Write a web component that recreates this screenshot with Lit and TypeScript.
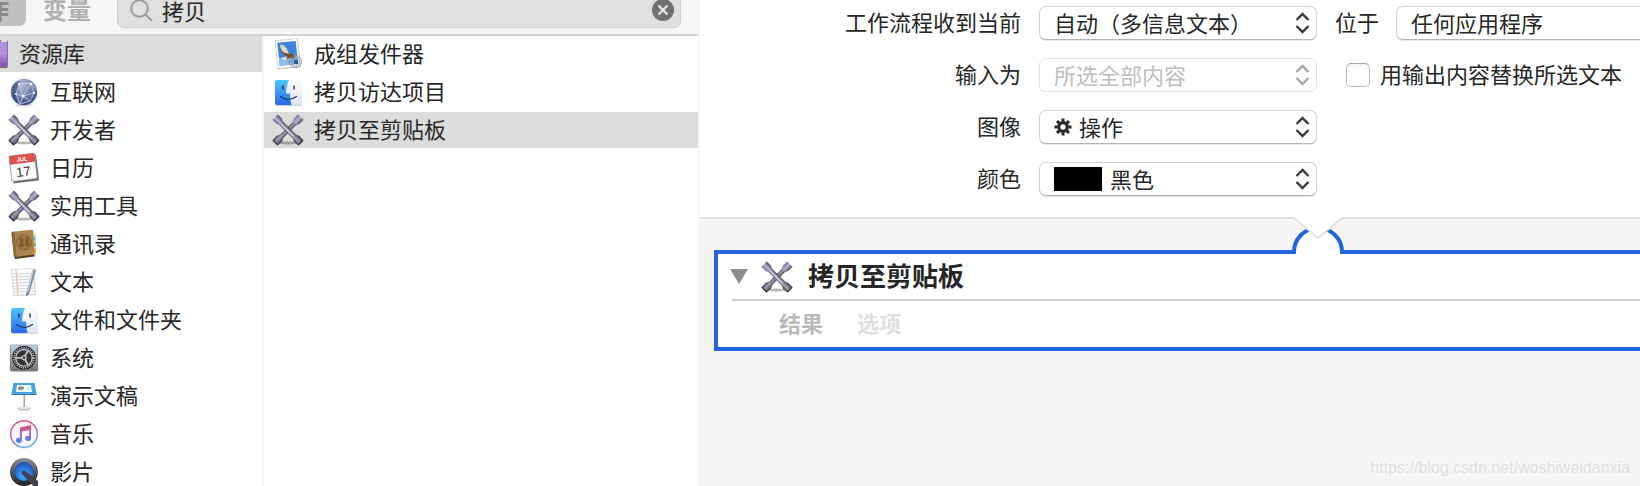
import { LitElement, html, svg, css, nothing, type SVGTemplateResult } from "lit";
import { customElement, property } from "lit/decorators.js";
import { classMap } from "lit/directives/class-map.js";

const ICONS: Record<string, SVGTemplateResult> = {
  library: svg`
    <defs><linearGradient id="g" x1="0" y1="0" x2="0" y2="1"><stop offset="0" stop-color="#a78fdc"/><stop offset=".5" stop-color="#b994e0"/><stop offset="1" stop-color="#8650b4"/></linearGradient></defs>
    <rect x="6" y="1" width="24" height="28" rx="2" fill="#8d6d9e"/>
    <rect x="6" y="2" width="23" height="25" rx="1" fill="url(#g)"/>
    <rect x="23" y="0" width="6" height="3" rx="1" fill="#dcdfd8"/>
    <path d="M6 28.5h23" stroke="#6f6a68" stroke-width="1.2"/>`,
  globe: svg`
    <defs><radialGradient id="g" cx=".4" cy=".2" r=".85"><stop offset="0" stop-color="#b4bfdb"/><stop offset=".5" stop-color="#7485b4"/><stop offset="1" stop-color="#35447a"/></radialGradient></defs>
    <ellipse cx="15" cy="28" rx="9" ry="1.6" fill="#000" opacity=".15"/>
    <circle cx="15" cy="15" r="13.2" fill="url(#g)"/>
    <path d="M2.5 11Q2 20 8 26.200Q7 14 11 4Q5 5 2.500 11Z" fill="#34406f" opacity=".6"/>
    <g fill="none" stroke="#dbe3f5" stroke-width=".8" opacity=".85"><path d="M10 7L22 6M10 7L7 17L14 19L22 6L25 16L14 19L11 27M14 19L21 24L25 16M7 17L11 27M10 7L14 19M21 24L11 27M22 6L28 13"/></g>
    <g fill="#fff"><circle cx="14" cy="19" r="1.500"/><circle cx="22" cy="7" r="1.200"/><circle cx="10" cy="7" r="1"/><circle cx="25" cy="16" r="1.100"/><circle cx="7" cy="17" r="1"/></g>`,
  tools: svg`
    <defs><linearGradient id="g" x1="0" y1="0" x2="1" y2="0"><stop offset="0" stop-color="#3c3c48"/><stop offset=".4" stop-color="#a5a5b4"/><stop offset="1" stop-color="#3e3e4c"/></linearGradient>
    <linearGradient id="h" x1="0" y1="0" x2="1" y2="0"><stop offset="0" stop-color="#6a619f"/><stop offset=".45" stop-color="#b9b8c8"/><stop offset="1" stop-color="#4a4a5a"/></linearGradient></defs>
    <ellipse cx="15" cy="28" rx="11" ry="1.400" fill="#000" opacity=".28"/>
    <g transform="rotate(45 15 15)"><rect x="12.800" y="2" width="4.400" height="26" fill="url(#g)"/><path d="M11.200-3.200h7.600v5.700l-1.600 3.500h-4.400l-1.600-3.500z" fill="url(#h)"/><path d="M11.200 33.200h7.600v-6.200l-1.600-3.500h-4.400l-1.600 3.500z" fill="url(#g)"/><path d="M11.600 32.800h6.800" stroke="#33333f" stroke-width="1.400"/></g>
    <g transform="rotate(-45 15 15)"><rect x="12.700" y="2" width="4.600" height="26" fill="url(#h)" stroke="#45445a" stroke-width=".5"/><path d="M14.200 5v20" stroke="#dddce8" stroke-width="1"/><path d="M11.200-3.200h7.600v5.700l-1.600 3.500h-4.400l-1.600-3.500z" fill="url(#h)"/><path d="M11.200 33.200h7.600v-6.200l-1.600-3.500h-4.400l-1.600 3.500z" fill="url(#g)"/><path d="M11.600 32.800h6.800" stroke="#33333f" stroke-width="1.400"/></g>`,
  calendar: svg`
    <g transform="rotate(-7 15 15)"><rect x="2.500" y="3" width="26" height="26" rx="1.500" fill="#61686a"/><rect x="1.500" y="1.500" width="25.500" height="25.500" rx="1.200" fill="#fbfbfb" stroke="#8d9494" stroke-width=".8"/><path d="M1.500 10V2.700Q1.500 1.500 2.700 1.500H26Q27 1.500 27 2.700V10Z" fill="#dc5048"/>
    <text x="14.200" y="8" font-family="Liberation Sans, sans-serif" font-size="6" font-weight="700" fill="#fff" text-anchor="middle">JUL</text>
    <text x="14" y="23" font-family="Liberation Sans, sans-serif" font-size="13" fill="#333" text-anchor="middle">17</text></g>`,
  contacts: svg`
    <path d="M23 4l4 .5v22l-3 1z" fill="#ece7dc"/><path d="M24.500 7l2 .5v4.500l-2-.5z" fill="#62b4e8"/><path d="M24.500 13l2.200.5v4.500l-2.200-.5z" fill="#65be62"/><path d="M24.500 19l2.500.5v5l-2.500-.5z" fill="#f0a438"/>
    <path d="M6 30L25.500 27.500V25L5 27z" fill="#4d3a20"/>
    <path d="M2.500 4.500Q2.500 3 4 2.800L22.500.8Q24 .7 24.200 2L25.500 25.500L6.500 28Q5 28 4.800 26.500Z" fill="#aa854f"/>
    <path d="M2.500 4.500Q2.500 3 4 2.800L5.500 2.600L7.500 27.800L6 28Q5 28 4.800 26.500Z" fill="#8a6738"/>
    <circle cx="15" cy="13.500" r="7.300" fill="#a17b46" stroke="#87652f" stroke-width="1.200"/>
    <path d="M10.500 9.500q2-2 3.800 0v5l1 2.500q-2 2.500-5.500 0l1-2.500zM16 9q2-2 3.800 0v4.500l1 2.500q-2 2.500-4.500 .5z" fill="#7e5c2c"/>`,
  text: svg`
    <path d="M2 3L25 2L27 28.500L5 29Z" fill="#bcbcbc" opacity=".5"/><path d="M2.500 2.500L25 1.500L26 27L4.500 28.500Z" fill="#fafafa" stroke="#d0d0d0" stroke-width=".7"/>
    <path d="M3.500 7l22-1M3.700 10l22-1M4 13l21.500-1M4 16l21.500-1M4.200 19l21.300-1M4.300 22l21-1M4.500 25l21-1" stroke="#ccd3d6" stroke-width=".9"/>
    <path d="M7 3l2 25" stroke="#f2b0b0" stroke-width="1"/>
    <path d="M24 2l3 1L20 27l-3 2 .5-4z" fill="#7c8fa0"/><path d="M24.500 2.500L18.500 25" stroke="#dce6ef" stroke-width="1"/><path d="M18.500 26l-1.500 3 2.300-2z" fill="#3c4148"/>`,
  finder: svg`
    <defs><linearGradient id="g" x1="0" y1="0" x2="0" y2="1"><stop offset="0" stop-color="#4cc5fb"/><stop offset="1" stop-color="#2b68ea"/></linearGradient><linearGradient id="h" x1="0" y1="0" x2="0" y2="1"><stop offset="0" stop-color="#fafafc"/><stop offset="1" stop-color="#dce5f2"/></linearGradient></defs>
    <rect x="2" y="4" width="27" height="25" rx="2" fill="#000" opacity=".18"/>
    <rect x="2" y="3" width="27" height="25" rx="2" fill="url(#h)"/>
    <path d="M4 3H16Q13 9 13 16.500H17Q17 23 18.500 28H4Q2 28 2 26V5Q2 3 4 3Z" fill="url(#g)"/>
    <path d="M10 9v3M21 9v3" stroke="#1d2c45" stroke-width="1.300" stroke-linecap="round"/>
    <path d="M7.500 19.500Q15 25.500 23.500 19.500" fill="none" stroke="#17305c" stroke-width="1.200" stroke-linecap="round"/>`,
  system: svg`
    <defs><linearGradient id="g" x1="0" y1="0" x2="0" y2="1"><stop offset="0" stop-color="#c5d0d6"/><stop offset="1" stop-color="#71767a"/></linearGradient></defs>
    <rect x="1" y="2.500" width="28" height="26" rx="1.800" fill="#444" opacity=".7"/><rect x="1.300" y="2" width="27.400" height="25.400" rx="1.500" fill="url(#g)" stroke="#777e82" stroke-width=".6"/>
    <circle cx="15" cy="14.800" r="11.800" fill="#181818"/><circle cx="15" cy="14.800" r="10" fill="none" stroke="#b8b8b8" stroke-width="1.800" stroke-dasharray="1.300 .9"/><circle cx="15" cy="14.800" r="8.300" fill="#333" stroke="#c5c5c5" stroke-width="1.400"/>
    <path d="M15 14.800H7M15 14.800L19 7.800M15 14.800L19 21.800" stroke="#c8c8c8" stroke-width="1.800"/><circle cx="15" cy="14.800" r="2.600" fill="#c8c8c8"/><circle cx="15" cy="14.800" r="1.300" fill="#333"/>`,
  keynote: svg`
    <ellipse cx="15" cy="27.500" rx="6.500" ry="2" fill="#b7c0c6"/><ellipse cx="15" cy="26.700" rx="6" ry="1.500" fill="#e6ecef"/>
    <path d="M15 13v13" stroke="#9ba4aa" stroke-width="2"/><path d="M14.600 13v13" stroke="#dfe5e8" stroke-width=".8"/>
    <path d="M4.500 2H25.500L27.500 12.500H2.500Z" fill="#3ea4e4"/><path d="M2.500 12.500h25v1.500h-25z" fill="#2474b8"/><path d="M8 4H22L23 11H7Z" fill="#f5f8fa"/>
    <path d="M12 5.200a3.400 2.400 0 0 0-3.200 2.500h3.200z" fill="#e15653"/><path d="M12 5.200a3.400 2.400 0 0 1 3.200 2.500h-3.200z" fill="#4799dc"/><path d="M8.800 7.700a3.400 2.400 0 0 0 6.400 0z" fill="#74b94d"/><path d="M17.500 6.500h3M17.500 8.500h3" stroke="#c5c5c5" stroke-width=".7"/>`,
  music: svg`
    <defs><linearGradient id="g" x1=".3" y1="0" x2=".6" y2="1"><stop offset="0" stop-color="#ec5565"/><stop offset=".5" stop-color="#b95cd2"/><stop offset="1" stop-color="#56b4ee"/></linearGradient>
    <linearGradient id="h" x1="0" y1="0" x2="0" y2="1"><stop offset="0" stop-color="#e4566a"/><stop offset=".5" stop-color="#a35ad0"/><stop offset="1" stop-color="#2f8fea"/></linearGradient></defs>
    <circle cx="15" cy="15.600" r="14" fill="#000" opacity=".15"/><circle cx="15" cy="15" r="13.300" fill="#f7f7fa" stroke="url(#g)" stroke-width="1.400"/>
    <path d="M11 8.500L22 6V19.500A3 2.500 0 1 1 20.200 17.200V11L12.800 12.600V21.500A3 2.500 0 1 1 11 19.200Z" fill="url(#h)"/>`,
  quicktime: svg`
    <defs><linearGradient id="g" x1="0" y1="0" x2="0" y2="1"><stop offset="0" stop-color="#8a929c"/><stop offset=".6" stop-color="#454a54"/><stop offset="1" stop-color="#1d2026"/></linearGradient><radialGradient id="h" cx=".5" cy=".7" r=".7"><stop offset="0" stop-color="#35b2ff"/><stop offset=".6" stop-color="#2b72dc"/><stop offset="1" stop-color="#204eaa"/></radialGradient></defs>
    <circle cx="15" cy="15" r="14" fill="url(#g)"/><circle cx="15" cy="14.600" r="9.500" fill="url(#h)"/>
    <path d="M12.500 16.500Q12.500 13.500 15.500 13.500L29 24V30H25.500Z" fill="#3e434b"/>`,
  mail: svg`
    <g transform="rotate(-6 15 15)"><rect x="4" y="1.500" width="22.500" height="28" fill="#000" opacity=".18"/><rect x="3.500" y=".5" width="22.500" height="28" fill="#fafafa" stroke="#b6bcc0" stroke-width="1" stroke-dasharray="1.600 1"/><rect x="5.500" y="2.800" width="18.500" height="23" fill="#3d84d8"/><path d="M5.500 18h18.500v7.800H5.500z" fill="#8fc0ea"/>
    <path d="M8 9Q11 9 14 13L23 17Q21 21 17 19L10 20L13 17Q9 14 8 9Z" fill="#765032"/><path d="M8 5Q12 5 14 9L16 15L11 13Q8 10 8 5Z" fill="#e2d8c6"/><path d="M8 19L14 17L12 21Z" fill="#f5f0e0"/><path d="M20 16l3.500 1-2 1.500z" fill="#e0a93c"/></g>
    <g fill="none" stroke="#77889a" stroke-width=".9" opacity=".85"><circle cx="22.500" cy="22.500" r="6"/><circle cx="22.500" cy="22.500" r="4"/><path d="M14 20q3-2 5 0t5 0M14 23q3-2 5 0t5 0"/></g><path d="M21 21h4v4h-4z" fill="#2b5a98"/>`,
};

/** A 30px application icon. Each lives in its own shadow root so gradient ids stay local. */
@customElement("app-icon")
class AppIcon extends LitElement {
  @property() name = "";
  static styles = css`
    :host { display: block; flex: none; width: 30px; height: 30px; }
    .art { display: block; width: 100%; height: 100%; overflow: visible; }
  `;
  render() {
    return html`<svg class="art" viewBox="0 0 30 30" aria-hidden="true">${ICONS[this.name] ?? nothing}</svg>`;
  }
}

/** Pop-up button with the double chevron; leading artwork goes in the slot. */
@customElement("pop-up")
class PopUp extends LitElement {
  @property() value = "";
  @property() label = "";
  @property() lead = "";
  @property({ type: Boolean }) disabled = false;
  static styles = css`
    :host { display: block; flex: none; width: 278px; }
    .box { display: grid; grid-template-columns: 1fr; align-items: center; height: 34px; }
    .box > * { grid-area: 1 / 1; }
    .field {
      appearance: none; box-sizing: border-box; width: 100%; height: 34px; margin: 0; padding: 0 28px 4px 14px;
      border: 1px solid #d2d2d2; border-bottom-color: #b4b4b4; border-radius: 7px; background: #fff;
      box-shadow: 0 1px 1px #0000001a; color: #262626; font: inherit; opacity: 1;
    }
    .field:disabled { color: #bdbdbd; border-color: #e4e4e4; box-shadow: none; }
    .gear { padding-left: 39px; }
    .swatch { padding-left: 70px; }
    .lead, .arrows { pointer-events: none; }
    .lead { justify-self: start; margin-left: 15px; display: flex; }
    .arrows { justify-self: end; margin-right: 7px; width: 15px; height: 22px; fill: none; stroke: #3a3a3a; stroke-width: 2.4; }
    .arrows.off { stroke: #a6a6a6; }
  `;
  render() {
    return html`<div class="box">
      <select class=${classMap({ field: true, gear: this.lead === "gear", swatch: this.lead === "swatch" })}
        aria-label=${this.label} ?disabled=${this.disabled}><option>${this.value}</option></select>
      <span class="lead"><slot></slot></span>
      <svg class=${classMap({ arrows: true, off: this.disabled })} viewBox="0 0 15 22" aria-hidden="true">
        <path d="M1.500 8L7.500 2L13.500 8M1.500 14L7.500 20L13.500 14"/></svg>
    </div>`;
  }
}

interface Row { icon: string; name: string; on?: boolean; root?: boolean }

const LIBRARY: Row[] = [
  { icon: "library", name: "资源库", on: true, root: true },
  { icon: "globe", name: "互联网" },
  { icon: "tools", name: "开发者" },
  { icon: "calendar", name: "日历" },
  { icon: "tools", name: "实用工具" },
  { icon: "contacts", name: "通讯录" },
  { icon: "text", name: "文本" },
  { icon: "finder", name: "文件和文件夹" },
  { icon: "system", name: "系统" },
  { icon: "keynote", name: "演示文稿" },
  { icon: "music", name: "音乐" },
  { icon: "quicktime", name: "影片" },
];

const ACTIONS: Row[] = [
  { icon: "mail", name: "成组发件器" },
  { icon: "finder", name: "拷贝访达项目" },
  { icon: "tools", name: "拷贝至剪贴板", on: true },
];

@customElement("app-root")
class AppRoot extends LitElement {
  static styles = css`
    :host {
      display: flex; height: 100vh; overflow: hidden; background: #f5f5f5; color: #262626;
      font: 22px/32px "Noto Sans CJK SC", sans-serif;
    }
    button { margin: 0; padding: 0; border: 0; background: none; color: inherit; font: inherit; text-align: left; }
    .browser { flex: none; width: 698px; display: flex; flex-direction: column; margin-right: 2px; }
    .toolbar {
      flex: none; display: flex; align-items: flex-end; box-sizing: border-box; height: 36px; padding: 0 17px 6px 0;
      border-bottom: 2px solid #d3d3d3; background: #f6f6f6; overflow: hidden;
    }
    .tabs { display: flex; flex: none; margin-left: -56px; padding-bottom: 2px; font-size: 24px; font-weight: 700; line-height: 34px; }
    .tab { padding: 0 17px; border-radius: 7px; color: #b0b0b0; }
    .tab.on { background: #c1c1c1; color: #888; }
    .search {
      flex: 1; display: flex; align-items: center; gap: 9px; box-sizing: border-box; height: 36px; margin-left: 9px;
      padding: 0 6px 0 12px; border: 1px solid #cecece; border-radius: 7px; background: #e0e0e0;
    }
    .lens { flex: none; width: 23px; height: 23px; fill: none; stroke: #9b9b9b; stroke-width: 2; }
    .query { flex: 1; min-width: 0; padding: 0; border: 0; outline: 0; background: none; color: #262626; font: inherit; }
    .clear { flex: none; width: 22px; height: 22px; }
    .glyph { display: block; width: 100%; height: 100%; }
    .columns { flex: 1; min-height: 0; display: grid; grid-template-columns: 262px 1fr; gap: 2px; }
    .list { display: flex; flex-direction: column; gap: 2px; margin: 0; padding: 0; list-style: none; background: #fff; overflow: hidden; }
    .row { display: flex; align-items: center; gap: 11px; width: 100%; height: 36px; padding-left: 9px; }
    .row.on { background: #dcdcdc; }
    .row.root { padding-left: 0; }
    .row.root app-icon { margin-left: -22px; }
    .text { display: block; padding-bottom: 4px; }
    .work { position: relative; flex: 1; min-width: 0; overflow: hidden; }
    .form {
      display: grid; grid-template-columns: 321px 278px max-content; gap: 18px; align-items: center;
      padding: 6px 0 21px; border-bottom: 2px solid #dfdfdf; background: #fff; line-height: 30px;
    }
    .name { text-align: right; }
    .wide { grid-column: span 2; }
    .scope { display: flex; gap: 17px; }
    .check { display: flex; align-items: center; gap: 10px; margin-left: 11px; }
    .tick {
      appearance: none; box-sizing: border-box; width: 24px; height: 24px; margin: 0; border: 1px solid #bcbcbc;
      border-top-color: #a2a2a2; border-radius: 5px; background: linear-gradient(#f4f4f4, #fff 6px);
    }
    .gear-art { display: block; width: 18px; height: 18px; }
    .ink { display: block; width: 48px; height: 24px; background: #000; }
    .card { margin: 31px 0 0 14px; border: 4px solid #2265db; border-right: 0; background: #fff; }
    .head { display: flex; align-items: center; height: 45px; padding-left: 12px; }
    .fold { flex: none; width: 18px; height: 15px; margin-right: 14px; }
    .title { margin: 0 0 0 16px; font-size: 26px; font-weight: 700; }
    .foot { display: flex; gap: 34px; margin-left: 14px; padding: 5px 0 5px 47px; border-top: 2px solid #cfcfcf; font-weight: 700; }
    .foot button { color: #bababa; }
    .foot .idle { color: #dedede; }
    .joint { position: absolute; left: 590px; top: 216px; width: 56px; height: 38px; }
    .mark {
      position: absolute; right: 10px; bottom: 8px; color: #dedede; text-shadow: -1px -1px 0 #fcfcfc;
      font: 16px/20px "Liberation Sans", sans-serif;
    }
  `;

  private rows(items: Row[]) {
    return html`<ul class="list">${items.map((r) => html`<li>
      <button class=${classMap({ row: true, on: !!r.on, root: !!r.root })}><app-icon name=${r.icon}></app-icon><span class="text">${r.name}</span></button>
    </li>`)}</ul>`;
  }

  render() {
    return html`
      <section class="browser">
        <header class="toolbar">
          <div class="tabs"><button class="tab on">操作</button><button class="tab">变量</button></div>
          <div class="search">
            <svg class="lens" viewBox="0 0 23 23" aria-hidden="true"><circle cx="9.500" cy="9.500" r="8.300"/><path d="M15.500 15.500L22 22"/></svg>
            <input class="query" type="text" aria-label="搜索" .value=${"拷贝"}>
            <button class="clear" aria-label="清除">
              <svg class="glyph" viewBox="0 0 22 22"><circle cx="11" cy="11" r="11" fill="#707070"/><path d="M6.500 6.500l9 9M15.500 6.500l-9 9" stroke="#e6e6e6" stroke-width="2.400"/></svg>
            </button>
          </div>
        </header>
        <div class="columns">${this.rows(LIBRARY)}${this.rows(ACTIONS)}</div>
      </section>
      <main class="work">
        <div class="form">
          <span class="name text">工作流程收到当前</span>
          <pop-up label="工作流程收到当前" value="自动（多信息文本）"></pop-up>
          <div class="scope"><span class="text">位于</span><pop-up label="位于" value="任何应用程序"></pop-up></div>
          <span class="name text">输入为</span>
          <pop-up label="输入为" value="所选全部内容" disabled></pop-up>
          <label class="check"><input class="tick" type="checkbox"><span class="text">用输出内容替换所选文本</span></label>
          <span class="name text">图像</span>
          <pop-up class="wide" label="图像" value="操作" lead="gear">
            <svg class="gear-art" viewBox="0 0 18 18" aria-hidden="true"><g stroke="#262626" fill="none"><circle cx="9" cy="9" r="4.300" stroke-width="3.200"/><path d="M9 .5v3M9 14.500v3M.5 9h3M14.500 9h3M3 3l2.100 2.100M12.900 12.900l2.100 2.100M3 15l2.100-2.100M12.900 5.100l2.100-2.100" stroke-width="3"/></g></svg>
          </pop-up>
          <span class="name text">颜色</span>
          <pop-up class="wide" label="颜色" value="黑色" lead="swatch"><span class="ink"></span></pop-up>
        </div>
        <article class="card">
          <div class="head">
            <button class="fold" aria-label="折叠"><svg class="glyph" viewBox="0 0 18 15"><path d="M0 0H18L9 15Z" fill="#8e8e8e"/></svg></button>
            <app-icon name="tools"></app-icon>
            <h2 class="title text">拷贝至剪贴板</h2>
          </div>
          <div class="foot"><button class="text">结果</button><button class="text idle">选项</button></div>
        </article>
        <svg class="joint" viewBox="0 0 56 38" aria-hidden="true">
          <path d="M6 38V34A22 22 0 0 1 50 34V38Z" fill="#fff"/>
          <path d="M4 38V36A24 24 0 0 1 52 36V38" fill="none" stroke="#2265db" stroke-width="4"/>
          <path d="M4.500 0V2L28 22L51.500 2V0Z" fill="#fff"/>
          <path d="M4 2L28 22L52 2" fill="none" stroke="#e2e2e2" stroke-width="2"/>
        </svg>
        <div class="mark">https://blog.csdn.net/woshiweidanxia</div>
      </main>`;
  }
}
